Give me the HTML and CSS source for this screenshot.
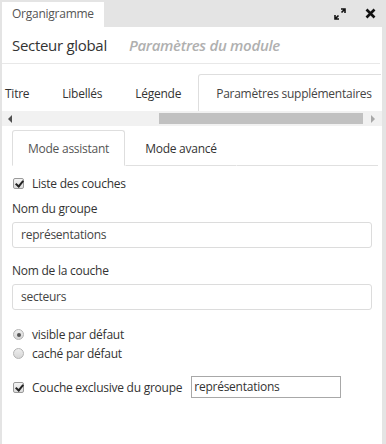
FILE: index.html
```html
<!DOCTYPE html>
<html lang="fr">
<head>
<meta charset="utf-8">
<link rel="stylesheet" href="styles.css">
</head>
<body>
<div class="titlebar">
  <div class="wtab">Organigramme</div>
  <div class="wicons">
    <svg class="ico-expand" width="12" height="12" viewBox="0 0 12 12"><path d="M7 1h4v4M11 1L7.5 4.5M5 11H1V7M1 11l3.5-3.5" fill="none" stroke="#111" stroke-width="1.6"/></svg>
    <svg class="ico-close" width="11" height="11" viewBox="0 0 11 11"><path d="M1.5 1.5l8 8M9.5 1.5l-8 8" stroke="#111" stroke-width="2.6"/></svg>
  </div>
</div>
<div class="panel">
  <div class="header">
    <span class="h-title">Secteur global</span>
    <span class="h-sub">Paramètres du module</span>
  </div>
  <div class="tabs-wrap">
    <div class="tabs">
      <div class="tab t1">Titre</div>
      <div class="tab">Libellés</div>
      <div class="tab">Légende</div>
      <div class="tab active">Paramètres supplémentaires</div>
    </div>
  </div>
  <div class="hscroll">
    <span class="arr-l"></span>
    <span class="thumb"></span>
    <span class="arr-r"></span>
  </div>
  <div class="subtabs">
    <div class="subtab active">Mode assistant</div>
    <div class="subtab">Mode avancé</div>
    <div class="subtab-line"></div>
  </div>
  <div class="form">
    <label class="check"><span class="cb checked"></span>Liste des couches</label>
    <div class="field-label">Nom du groupe</div>
    <div class="input">représentations</div>
    <div class="field-label second">Nom de la couche</div>
    <div class="input">secteurs</div>
    <div class="radios">
      <label class="check"><span class="rb on"></span>visible par défaut</label>
      <label class="check"><span class="rb"></span>caché par défaut</label>
    </div>
    <div class="excl">
      <label class="check"><span class="cb checked"></span>Couche exclusive du groupe</label>
      <div class="small-input">représentations</div>
    </div>
  </div>
</div>
</body>
</html>
```
FILE: styles.css
```css
html, body {
  margin: 0;
  padding: 0;
}
body {
  width: 386px;
  height: 444px;
  overflow: hidden;
  background: #e4e4e4;
  font-family: "Open Sans", "Noto Sans", sans-serif;
  color: #333;
  font-size: 12px;
  letter-spacing: -0.25px;
}
.titlebar {
  height: 27px;
  display: flex;
  align-items: flex-end;
  padding-left: 2px;
  padding-right: 10px;
}
.wtab {
  background: #fff;
  height: 25px;
  line-height: 24px;
  padding: 0 10px 0 10px;
  color: #555;
  font-size: 12px;
}
.wicons {
  margin-left: auto;
  align-self: center;
  display: flex;
  align-items: center;
  gap: 19px;
}
.panel {
  background: #fff;
  margin: 0 4px 0 2px;
  height: 417px;
  overflow: hidden;
}
.header {
  height: 36px;
  border-bottom: 1px solid #e8e8e8;
  display: flex;
  align-items: center;
  padding: 0 10px;
  margin-right: 2px;
}
.h-title {
  font-size: 15px;
  color: #333;
  letter-spacing: -0.3px;
}
.h-sub {
  margin-left: 22px;
  font-size: 15px;
  font-style: italic;
  font-weight: 600;
  color: #b0b0b0;
  letter-spacing: -0.3px;
}
.tabs-wrap {
  padding-top: 10px;
  overflow: hidden;
  margin-right: 1px;
}
.tabs {
  display: flex;
  margin-left: -13px;
  height: 37px;
}
.tab {
  padding: 0 15px;
  line-height: 37px;
  font-size: 12px;
  color: #333;
  margin-right: 1px;
  border: 1px solid transparent;
  border-bottom: none;
  border-radius: 3px 3px 0 0;
  white-space: nowrap;
}
.tab.active {
  border-color: #dedede;
  color: #444;
  padding: 0 17px;
}
.hscroll {
  height: 15px;
  background: #f1f1f1;
  display: flex;
  align-items: center;
}
.arr-l {
  margin-left: 6px;
  width: 0;
  height: 0;
  border-top: 4px solid transparent;
  border-bottom: 4px solid transparent;
  border-right: 4px solid #505050;
}
.thumb {
  margin-left: 147px;
  width: 204px;
  height: 11px;
  background: #c1c1c1;
}
.arr-r {
  margin-left: 8px;
  width: 0;
  height: 0;
  border-top: 4px solid transparent;
  border-bottom: 4px solid transparent;
  border-left: 4px solid #a8a8a8;
}
.subtabs {
  display: flex;
  margin: 4px 4px 0 10px;
  height: 36px;
}
.subtab {
  padding: 0 19px;
  line-height: 35px;
  font-size: 12px;
  color: #333;
  border: 1px solid transparent;
  border-bottom: 1px solid #e0e0e0;
  border-radius: 3px 3px 0 0;
  white-space: nowrap;
  box-sizing: border-box;
  height: 36px;
}
.subtab.active {
  border-color: #dedede;
  border-bottom-color: #fff;
  color: #555;
  padding: 0 15px;
}
.subtab-line {
  flex: 1;
  border-bottom: 1px solid #e0e0e0;
}
.form {
  padding: 8px 10px 0 10px;
}
.check {
  display: flex;
  align-items: center;
  height: 19px;
  font-size: 12px;
  color: #333;
}
.cb {
  width: 11px;
  height: 11px;
  border: 1px solid #9a9a9a;
  border-radius: 2px;
  background: linear-gradient(#f4f4f4, #dcdcdc);
  margin: 0 8px 0 1px;
  position: relative;
  box-sizing: border-box;
}
.cb.checked::after {
  content: "";
  position: absolute;
  left: 3px;
  top: 0px;
  width: 3px;
  height: 6px;
  border-right: 2px solid #222;
  border-bottom: 2px solid #222;
  transform: rotate(40deg);
}
.field-label {
  margin-top: 6px;
  height: 19px;
  line-height: 19px;
  font-size: 12px;
  color: #333;
}
.field-label.second {
  margin-top: 13px;
}
.input {
  margin-top: 4px;
  height: 24px;
  line-height: 24px;
  border: 1px solid #dcdcdc;
  border-radius: 3px;
  padding: 0 8px;
  font-size: 12px;
  color: #444;
}
.radios {
  margin-top: 15px;
}
.rb {
  width: 11px;
  height: 11px;
  border-radius: 50%;
  border: 1px solid #b4b4b4;
  background: linear-gradient(#eee, #d6d6d6);
  margin: 0 8px 0 1px;
  box-sizing: border-box;
  position: relative;
}
.rb.on::after {
  content: "";
  position: absolute;
  left: 2.5px;
  top: 2.5px;
  width: 4px;
  height: 4px;
  border-radius: 50%;
  background: #555;
}
.excl {
  margin-top: 13px;
  display: flex;
  align-items: center;
}
.small-input {
  margin-left: 9px;
  width: 144px;
  height: 20px;
  line-height: 20px;
  border: 1px solid #a8a8a8;
  padding: 0 2px;
  font-size: 12px;
  color: #333;
}
```
